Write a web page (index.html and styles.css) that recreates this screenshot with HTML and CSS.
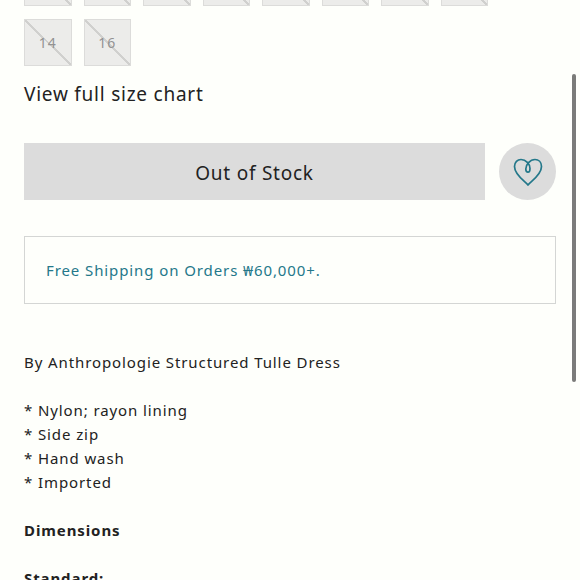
FILE: index.html
```html
<!DOCTYPE html>
<html lang="en">
<head>
    <meta charset="UTF-8">
    <meta name="viewport" content="width=device-width, initial-scale=1">
    <title>Structured Tulle Dress</title>
    <link rel="stylesheet" href="styles.css">
</head>
<body>
<main class="product">
    <div class="sizes">
        <button class="size" type="button" disabled></button>
        <button class="size" type="button" disabled></button>
        <button class="size" type="button" disabled></button>
        <button class="size" type="button" disabled></button>
        <button class="size" type="button" disabled></button>
        <button class="size" type="button" disabled></button>
        <button class="size" type="button" disabled></button>
        <button class="size" type="button" disabled></button>
        <button class="size" type="button" disabled>14</button>
        <button class="size" type="button" disabled>16</button>
    </div>
    <a class="size-chart" href="#">View full size chart</a>

    <div class="actions">
        <button class="stock" type="button" disabled>Out of Stock</button>
        <button class="wish" type="button" aria-label="Add to wish list">
            <svg class="heart" viewBox="0 0 30 30">
                <path d="M15 28 C12 24 1.500 18 1.500 9.500 C1.500 5 4.500 2.500 8 2.500 C13 2.500 17 7 17 11.500 C17 14 16.300 15.200 15 15.200 C13.700 15.200 12.800 14 12.800 12 C12.800 7.500 17 2.500 22 2.500 C25.500 2.500 28.500 5 28.500 9.500 C28.500 18 18 24 15 28 Z"/>
            </svg>
        </button>
    </div>

    <p class="shipping">Free Shipping on Orders ₩60,000+.</p>

    <section class="details">
        <p>By Anthropologie Structured Tulle Dress</p>
        <p>* Nylon; rayon lining<br>
        * Side zip<br>
        * Hand wash<br>
        * Imported</p>
        <h2>Dimensions</h2>
        <h2>Standard:</h2>
    </section>
</main>
<div class="scroll-thumb"></div>
</body>
</html>
```

FILE: styles.css
```css
* {
    box-sizing: border-box;
}

body {
    margin: 0;
    height: 100vh;
    overflow: hidden;
    background: #fefffb;
    color: #222;
    font-family: "Noto Sans", "Noto Sans CJK KR", sans-serif;
    font-size: 15px;
    line-height: 24px;
    letter-spacing: 0.06em;
}

button {
    font: inherit;
    letter-spacing: inherit;
    border: 0;
    padding: 0;
}

.product {
    padding: 0 24px;
}

/* the first row of sizes is scrolled up past the top edge */
.sizes {
    display: grid;
    grid-template-columns: repeat(8, 1fr);
    gap: 13px 12px;
    max-width: 464px;
    margin-top: -42px;
}

.size {
    aspect-ratio: 1;
    padding-top: 2px;
    border: 1px solid #dcdcda;
    background: linear-gradient(to top right, transparent calc(50% - 1px), #d0d0ce calc(50% - 1px), #d0d0ce calc(50% + 1px), transparent calc(50% + 1px)) #ececea;
    color: #929292;
    font-size: 14px;
}

.size-chart {
    display: block;
    margin-top: 16px;
    color: inherit;
    font-size: 19px;
    letter-spacing: 0.04em;
    text-decoration: none;
}

.actions {
    display: flex;
    gap: 14px;
    margin-top: 37px;
}

.stock {
    flex: 1;
    padding-top: 2px;
    background: #dcdcdc;
    color: #222;
    font-size: 19px;
    letter-spacing: 0.04em;
}

.wish {
    display: flex;
    align-items: center;
    justify-content: center;
    width: 57px;
    height: 57px;
    border-radius: 50%;
    background: #dcdcdc;
}

.heart {
    width: 30px;
    height: 30px;
    fill: none;
    stroke: #24788a;
    stroke-width: 1.700;
    stroke-linejoin: round;
}

.shipping {
    margin: 36px 0 0;
    padding: 21px;
    border: 1px solid #d4d6d4;
    color: #24788a;
}

.details {
    margin-top: 46px;
}

.details p,
.details h2 {
    margin: 0 0 24px;
    font-size: 15px;
}

.scroll-thumb {
    position: absolute;
    top: 74px;
    right: 4px;
    width: 4px;
    height: 308px;
    border-radius: 2px;
    background: #7b7b79;
}
```
